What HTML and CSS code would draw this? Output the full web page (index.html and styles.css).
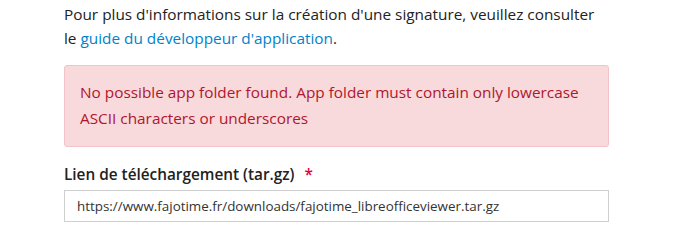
FILE: index.html
```html
<!DOCTYPE html>
<html lang="fr">
<head>
<meta charset="utf-8">
<link rel="stylesheet" href="styles.css">
</head>
<body>
<main class="content">
  <p class="intro">Pour plus d'informations sur la création d'une signature, veuillez consulter le <a href="#" class="link">guide du développeur d'application</a>.</p>
  <div class="alert">No possible app folder found. App folder must contain only lowercase ASCII characters or underscores</div>
  <div class="field">
    <label class="label">Lien de téléchargement (tar.gz) <span class="req">*</span></label>
    <input class="input" type="text" value="https://www.fajotime.fr/downloads/fajotime_libreofficeviewer.tar.gz">
  </div>
</main>
</body>
</html>
```
FILE: styles.css
```css
html, body {
  margin: 0;
  padding: 0;
  background: #fff;
}
body {
  font-family: "Open Sans", "Noto Sans", sans-serif;
  font-size: 15.35px;
  color: #222;
}
.content {
  width: 545px;
  margin-left: 64px;
  padding-top: 2px;
}
.intro {
  margin: 0;
  line-height: 24px;
}
.link {
  color: #0082c9;
  text-decoration: none;
}
.alert {
  margin-top: 15px;
  background: #f8d9dc;
  border: 1px solid #f2c4c9;
  border-radius: 3px;
  color: #b0162c;
  padding: 13px 15px 15px 15px;
  line-height: 26px;
}
.field {
  margin-top: 15px;
  display: flex;
  flex-direction: column;
}
.label {
  font-weight: 600;
  line-height: 24px;
  margin-bottom: 4px;
}
.req {
  color: #e9003a;
  margin-left: 6px;
}
.input {
  box-sizing: border-box;
  width: 545px;
  height: 32px;
  border: 1px solid #cfcfcf;
  border-radius: 0;
  padding: 0 12px;
  font-family: "Open Sans", "Noto Sans", sans-serif;
  font-size: 13.4px;
  color: #333;
  background: #fff;
}
```
